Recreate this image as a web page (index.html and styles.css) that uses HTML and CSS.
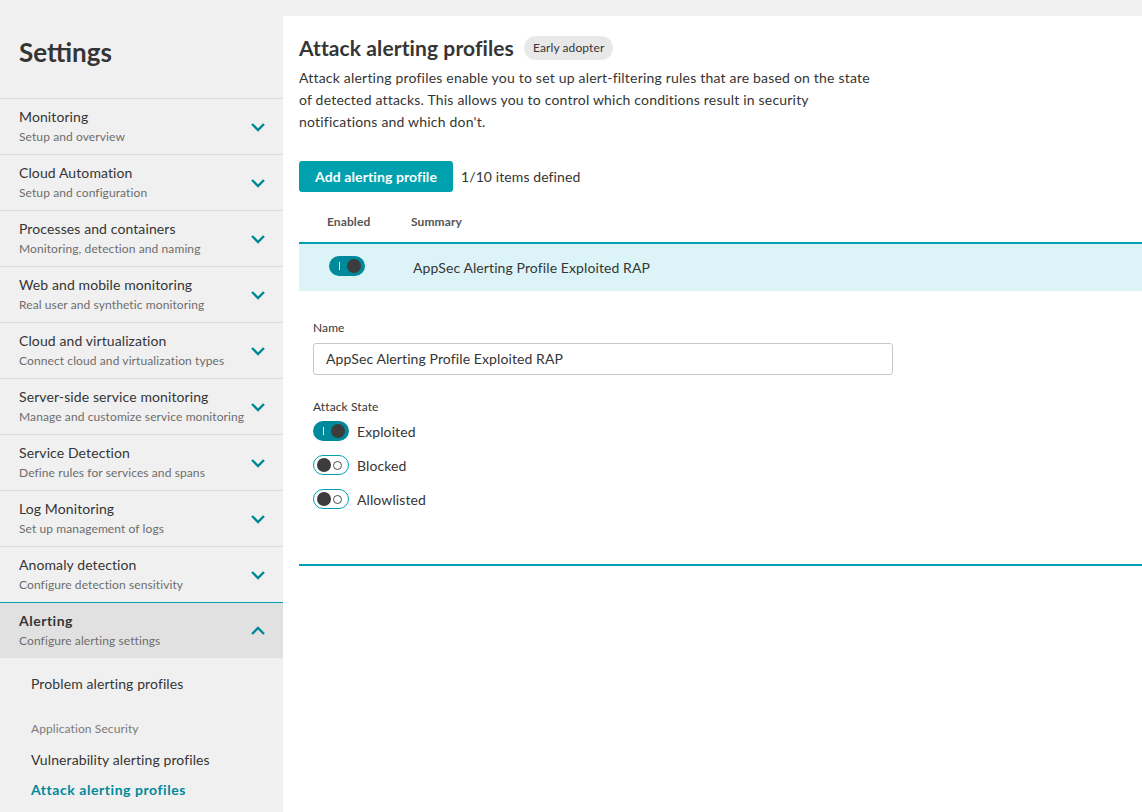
FILE: index.html
```html
<!DOCTYPE html>
<html lang="en">
<head>
<meta charset="utf-8">
<title>Attack alerting profiles</title>
<link rel="stylesheet" href="styles.css">
</head>
<body>
<div class="layout">
  <aside class="sidebar">
    <h1 class="sidebar-title">Settings</h1>
    <nav class="nav">
      <div class="nav-item"><div class="nav-text"><div class="nav-name">Monitoring</div><div class="nav-sub">Setup and overview</div></div><svg class="chev" viewBox="0 0 16 10"><path d="M2 2l6 6 6-6"/></svg></div>
      <div class="nav-item"><div class="nav-text"><div class="nav-name">Cloud Automation</div><div class="nav-sub">Setup and configuration</div></div><svg class="chev" viewBox="0 0 16 10"><path d="M2 2l6 6 6-6"/></svg></div>
      <div class="nav-item"><div class="nav-text"><div class="nav-name">Processes and containers</div><div class="nav-sub">Monitoring, detection and naming</div></div><svg class="chev" viewBox="0 0 16 10"><path d="M2 2l6 6 6-6"/></svg></div>
      <div class="nav-item"><div class="nav-text"><div class="nav-name">Web and mobile monitoring</div><div class="nav-sub">Real user and synthetic monitoring</div></div><svg class="chev" viewBox="0 0 16 10"><path d="M2 2l6 6 6-6"/></svg></div>
      <div class="nav-item"><div class="nav-text"><div class="nav-name">Cloud and virtualization</div><div class="nav-sub">Connect cloud and virtualization types</div></div><svg class="chev" viewBox="0 0 16 10"><path d="M2 2l6 6 6-6"/></svg></div>
      <div class="nav-item"><div class="nav-text"><div class="nav-name">Server-side service monitoring</div><div class="nav-sub">Manage and customize service monitoring</div></div><svg class="chev" viewBox="0 0 16 10"><path d="M2 2l6 6 6-6"/></svg></div>
      <div class="nav-item"><div class="nav-text"><div class="nav-name">Service Detection</div><div class="nav-sub">Define rules for services and spans</div></div><svg class="chev" viewBox="0 0 16 10"><path d="M2 2l6 6 6-6"/></svg></div>
      <div class="nav-item"><div class="nav-text"><div class="nav-name">Log Monitoring</div><div class="nav-sub">Set up management of logs</div></div><svg class="chev" viewBox="0 0 16 10"><path d="M2 2l6 6 6-6"/></svg></div>
      <div class="nav-item"><div class="nav-text"><div class="nav-name">Anomaly detection</div><div class="nav-sub">Configure detection sensitivity</div></div><svg class="chev" viewBox="0 0 16 10"><path d="M2 2l6 6 6-6"/></svg></div>
      <div class="nav-item nav-item-open"><div class="nav-text"><div class="nav-name">Alerting</div><div class="nav-sub">Configure alerting settings</div></div><svg class="chev" viewBox="0 0 16 10"><path d="M2 8l6-6 6 6"/></svg></div>
      <div class="subnav">
        <a class="sub-link sub-first">Problem alerting profiles</a>
        <div class="sub-group">Application Security</div>
        <a class="sub-link sub-vuln">Vulnerability alerting profiles</a>
        <a class="sub-link sub-link-active">Attack alerting profiles</a>
      </div>
    </nav>
  </aside>
  <main class="main">
    <div class="title-row">
      <h2 class="page-title">Attack alerting profiles</h2>
      <span class="badge">Early adopter</span>
    </div>
    <p class="desc">Attack alerting profiles enable you to set up alert-filtering rules that are based on the state of detected attacks. This allows you to control which conditions result in security notifications and which don't.</p>
    <div class="actions">
      <button class="btn">Add alerting profile</button>
      <span class="count">1/10 items defined</span>
    </div>
    <div class="table">
      <div class="thead">
        <div class="col-enabled">Enabled</div>
        <div class="col-summary">Summary</div>
      </div>
      <div class="trow">
        <div class="col-enabled"><span class="toggle on"><span class="knob"></span></span></div>
        <div class="col-summary">AppSec Alerting Profile Exploited RAP</div>
      </div>
      <div class="details">
        <label class="field-label">Name</label>
        <div class="input">AppSec Alerting Profile Exploited RAP</div>
        <div class="field-label state-label">Attack State</div>
        <div class="toggle-list">
          <div class="toggle-row"><span class="toggle on"><span class="knob"></span></span><span>Exploited</span></div>
          <div class="toggle-row"><span class="toggle off"><span class="knob"></span></span><span>Blocked</span></div>
          <div class="toggle-row"><span class="toggle off"><span class="knob"></span></span><span>Allowlisted</span></div>
        </div>
      </div>
    </div>
  </main>
</div>
</body>
</html>
```

FILE: styles.css
```css
* { box-sizing: border-box; }
html, body { margin: 0; padding: 0; }
body {
  background: #f0f0f0;
  font-family: Lato, "Open Sans", sans-serif;
  color: #353535;
  font-size: 14px;
  letter-spacing: 0.1px;
}
.layout {
  display: flex;
  min-height: 812px;
}
.sidebar {
  width: 283px;
  flex-shrink: 0;
}
.sidebar-title {
  margin: 0;
  padding: 36px 0 0 19px;
  height: 98px;
  font-size: 26px;
  font-weight: 700;
  color: #353535;
  line-height: 32px;
  letter-spacing: 0;
}
.nav-item {
  height: 56px;
  border-top: 1px solid #dcdcdc;
  display: flex;
  align-items: center;
  justify-content: space-between;
  padding: 0 17px 0 19px;
}
.nav-text { display: flex; flex-direction: column; }
.nav-name { font-size: 14px; line-height: 20px; color: #353535; margin-top: -1px; }
.nav-sub { font-size: 12px; line-height: 18px; color: #6d6d6d; margin-top: 1px; }
.chev {
  width: 16px;
  height: 10px;
  fill: none;
  stroke: #00889b;
  stroke-width: 2.4;
}
.nav-item-open {
  background: #e1e1e1;
  border-top: 1px solid #00a1b2;
}
.nav-item-open .nav-name { font-weight: 700; letter-spacing: 0.5px; }
.subnav {
  display: flex;
  flex-direction: column;
  padding: 16px 0 0 31px;
}
.sub-link { font-size: 14px; line-height: 20px; color: #353535; }
.sub-first { margin-bottom: 26px; }
.sub-group { font-size: 12px; line-height: 18px; color: #7a7a7a; margin-bottom: 12px; }
.sub-vuln { margin-bottom: 10px; }
.sub-link-active { color: #00889b; font-weight: 700; letter-spacing: 0.55px; }

.main {
  flex: 1;
  background: #fff;
  margin-top: 16px;
  padding: 19px 0 0 16px;
}
.title-row {
  display: flex;
  align-items: center;
  gap: 10px;
}
.page-title {
  margin: 0;
  font-size: 21px;
  font-weight: 700;
  line-height: 26px;
  color: #353535;
  letter-spacing: 0.1px;
}
.badge {
  background: #e8e8e8;
  border-radius: 12px;
  font-size: 12px;
  line-height: 24px;
  padding: 0 9px;
  color: #353535;
}
.desc {
  margin: 6px 0 0;
  width: 578px;
  line-height: 22px;
  font-size: 14px;
  letter-spacing: 0.2px;
}
.actions {
  display: flex;
  align-items: center;
  gap: 8px;
  margin-top: 28px;
}
.btn {
  background: #00a1ae;
  color: #fff;
  border: 0;
  border-radius: 3px;
  height: 31px;
  padding: 0 16px;
  font-family: inherit;
  font-size: 14px;
  font-weight: 700;
  letter-spacing: 0.1px;
}
.count { font-size: 14px; }
.thead {
  display: flex;
  align-items: flex-end;
  height: 52px;
  padding-bottom: 11px;
  border-bottom: 2px solid #00a1b2;
  font-size: 12px;
  line-height: 18px;
  font-weight: 700;
  color: #555;
}
.col-enabled { width: 112px; padding-left: 28px; }
.trow {
  display: flex;
  align-items: center;
  height: 47px;
  background: #dcf4f7;
  font-size: 14px;
}
.trow .col-enabled { padding-left: 30px; }
.trow .col-summary { padding-left: 2px; margin-top: -1px; }
.details {
  padding: 28px 0 0 14px;
  height: 275px;
  border-bottom: 2px solid #00a1b2;
}
.field-label { display: block; font-size: 12px; line-height: 18px; color: #353535; }
.input {
  margin-top: 6px;
  width: 580px;
  height: 32px;
  border: 1px solid #c8c8c8;
  border-radius: 3px;
  padding: 0 12px;
  line-height: 30px;
  font-size: 14px;
}
.state-label { margin-top: 23px; }
.toggle-list { display: flex; flex-direction: column; gap: 14px; margin-top: 5px; }
.toggle-row { display: flex; align-items: center; gap: 8px; font-size: 14px; height: 20px; }
.toggle {
  position: relative;
  display: inline-block;
  width: 36px;
  height: 20px;
  border-radius: 10px;
  flex-shrink: 0;
}
.toggle.on { background: #00899a; }
.toggle.on::before {
  content: "";
  position: absolute;
  left: 10px; top: 6px;
  width: 1px; height: 8px;
  background: #fff;
}
.toggle.off { background: #fff; border: 1.5px solid #00a1b2; }
.toggle.off::after {
  content: "";
  position: absolute;
  right: 6px; top: 5px;
  width: 7px; height: 7px;
  border: 1px solid #4a4a4a;
  border-radius: 50%;
}
.knob {
  position: absolute;
  width: 14px; height: 14px;
  border-radius: 50%;
  background: #3c3c3c;
  top: 3px;
}
.toggle.on .knob { right: 4px; }
.toggle.off .knob { left: 3px; top: 1.5px; }
```
